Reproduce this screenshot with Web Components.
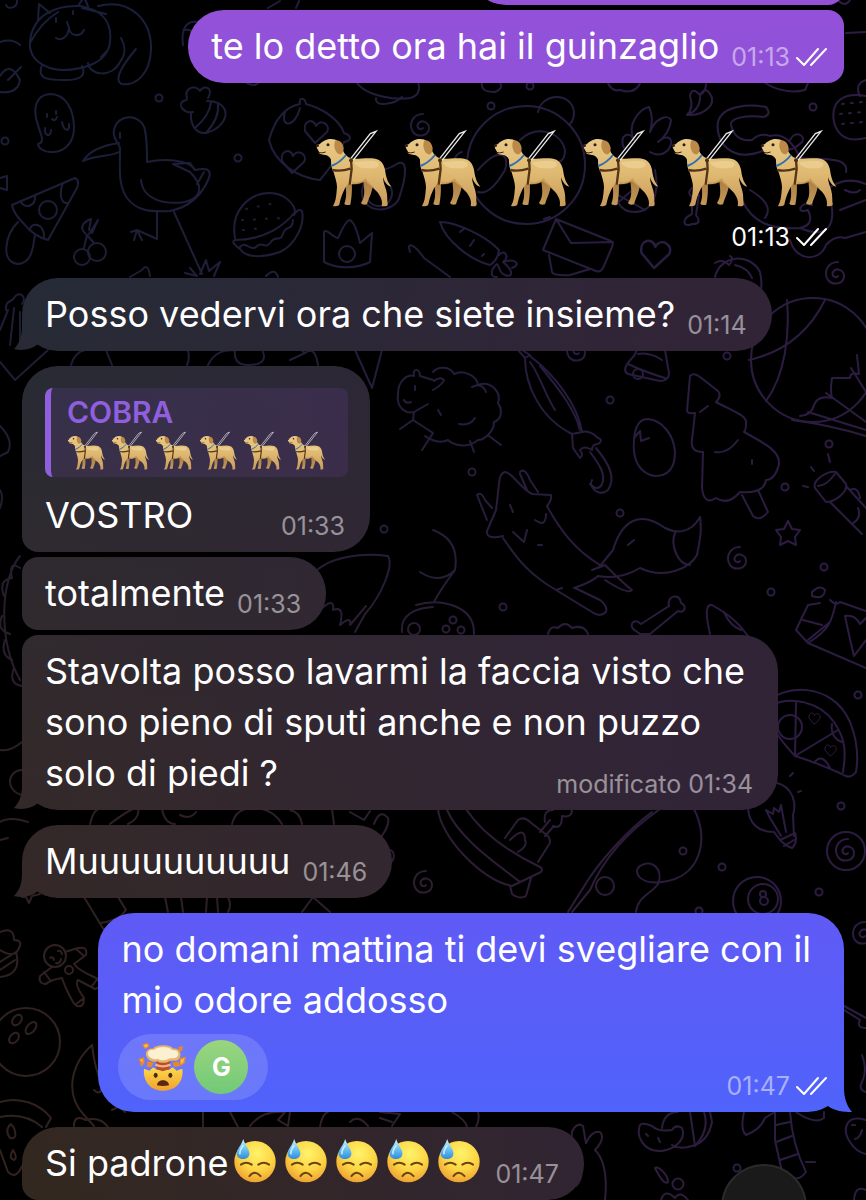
<!DOCTYPE html>
<html lang="it">
<head>
<meta charset="utf-8">
<meta name="viewport" content="width=device-width, initial-scale=1">
<title>Chat</title>
<style>
    body{
        margin: 0;
        background: #000;
        color: #fff;
        font-family: Inter, "Liberation Sans", sans-serif;
        height: 100vh;
        overflow: hidden;
    }
</style>
</head>
<body>
<chat-screen>
    <chat-bubble out empty></chat-bubble>
    <chat-bubble out joined time="01:13">te lo detto ora hai il guinzaglio</chat-bubble>
    <chat-stickers time="01:13">
        <chat-emoji name="dog"></chat-emoji><chat-emoji name="dog"></chat-emoji><chat-emoji name="dog"></chat-emoji><chat-emoji name="dog"></chat-emoji><chat-emoji name="dog"></chat-emoji><chat-emoji name="dog"></chat-emoji>
    </chat-stickers>
    <chat-bubble tail time="01:14">Posso vedervi ora che siete insieme?</chat-bubble>
    <chat-bubble first time="01:33">
        <chat-quote slot="quote" name="COBRA">
            <chat-emoji small name="dog"></chat-emoji><chat-emoji small name="dog"></chat-emoji><chat-emoji small name="dog"></chat-emoji><chat-emoji small name="dog"></chat-emoji><chat-emoji small name="dog"></chat-emoji><chat-emoji small name="dog"></chat-emoji>
        </chat-quote>VOSTRO</chat-bubble>
    <chat-bubble joined time="01:33">totalmente</chat-bubble>
    <chat-bubble joined tail multiline time="01:34" note="modificato">Stavolta posso lavarmi la faccia visto che<br>sono pieno di sputi anche e non puzzo<br>solo di piedi ?</chat-bubble>
    <chat-bubble tail time="01:46">Muuuuuuuuuu</chat-bubble>
    <chat-bubble out tail multiline time="01:47">no domani mattina ti devi svegliare con il<br>mio odore addosso<chat-reaction slot="reaction" initial="G"></chat-reaction></chat-bubble>
    <chat-bubble first time="01:47">Si padrone<chat-emoji name="sweat"></chat-emoji><chat-emoji name="sweat"></chat-emoji><chat-emoji name="sweat"></chat-emoji><chat-emoji name="sweat"></chat-emoji><chat-emoji name="sweat"></chat-emoji></chat-bubble>
</chat-screen>

<script>
// hand drawn wallpaper, coloured through a mask
class ChatWallpaper extends HTMLElement {
    constructor() {
        super();
    }
    connectedCallback() {
        let root = this.attachShadow({ mode: 'open' });
        root.innerHTML = `
    <style>
    :host{
        display: block;
        overflow: hidden;
    }
    svg{
        display: block;
        width: 100%;
        height: 100%;
    }
    </style>
    <svg viewBox="0 0 866 1200" preserveAspectRatio="xMinYMin slice" aria-hidden="true">
        <defs>
            <linearGradient id="down" x2="0" y2="1">
                <stop offset="0" stop-color="#191f3a"/>
                <stop offset=".35" stop-color="#201d34"/>
                <stop offset=".65" stop-color="#2d1f25"/>
                <stop offset="1" stop-color="#33221d"/>
            </linearGradient>
            <linearGradient id="side">
                <stop offset=".15" stop-color="#2c1c42" stop-opacity="0"/>
                <stop offset=".9" stop-color="#2c1c42"/>
            </linearGradient>
            <g id="spiral"><path d="M2 1 C0 4 -5 1 -3 -3 C0 -8 8 -5 8 1 C8 9 -3 11 -8 5 C-13 -3 -8 -13 2 -13"/></g>
            <g id="dot"><circle r="3.5"/></g>
            <g id="heart"><path d="M0 12 L-10 0 C-12 -11 -1 -13 1 -5 C6 -13 16 -6 12 1 Z"/></g>
            <g id="star"><path d="M0 -12 L4 -4 L12 -3 L7 4 L8 12 L0 8 L-8 12 L-7 4 L-12 -3 L-4 -4 Z"/></g>
            <mask id="lines" maskUnits="userSpaceOnUse" x="0" y="0" width="866" height="1200">
                <g fill="none" stroke="#fff" stroke-width="2" stroke-linecap="round" stroke-linejoin="round">
                    <!-- cat -->
                    <path d="M30 41 C33 15 55 5 80 6 C105 10 112 25 110 42 C108 62 85 70 62 70 C45 69 28 60 30 41Z M38 20 L39 4 L50 13 M78 6 L84 -3 L88 6 M30 43 C38 28 48 18 58 12 M82 8 L106 14 M98 6 C130 -2 152 20 151 50 C150 75 135 86 122 84 C112 80 125 62 136 49 M88 63 C90 76 112 78 120 62 C126 54 126 47 121 38 M42 65 C36 80 50 80 65 80 C82 80 86 75 82 66 M56 38 C60 41 68 38 69 28 L67 22 M69 28 C70 36 80 38 84 30 M56 18 V22 M73 11 V14 M101 57 L108 50"/>
                    <path d="M0 42 Q12 38 20 45 M0 76 Q10 60 20 80 Q18 94 0 92 M8 80 L21 67 M6 5 C8 10 18 8 17 0"/>
                    <!-- ghost -->
                    <path d="M38 144 C46 142 40 134 38 125 C32 108 36 95 50 94 C66 94 74 110 74 128 C74 145 62 153 50 152 C44 152 38 148 38 144Z M45 128 C44 136 51 138 51 130 M62 122 C64 132 70 132 69 124 M52 119 Q55 122 57 117 M47 114 V117 M56 111 V114"/>
                    <!-- bee -->
                    <path d="M193 112 C185 114 178 106 182 102 C184 99 187 102 187 98 C184 88 195 84 200 91 C204 84 214 88 208 98 M191 113 C190 125 196 134 206 133 C218 130 228 120 225 110 C222 103 214 101 207 101 M195 128 C202 122 210 112 211 102 M206 133 C214 124 219 114 218 105"/>
                    <!-- bird -->
                    <path d="M147 162 C147 150 146 135 145 130 C142 114 118 112 114 130 C112 140 119 142 120 148 C120 170 118 185 127 198 C137 211 150 212 170 211 C190 207 202 195 209 178 C212 168 205 168 195 170 C190 160 165 158 147 162 M119 143 C105 145 90 150 83 161 C95 155 110 157 119 152 M141 180 C143 200 165 205 185 202 C203 197 203 185 190 172 L173 164 L190 163 L195 170 M197 184 L204 172 M120 133 V138 M157 212 V239 L137 230 M137 230 L131 232 M137 230 L134 240 M137 230 L142 240 M174 212 L202 274 M185 273 L197 276 L190 268 M200 274 L206 260 L209 271 L220 262 L214 276"/>
                    <!-- pizza slice -->
                    <path d="M12 205 L75 178 C80 180 78 185 77 188 L48 240 C40 238 30 232 25 225 C18 218 13 212 12 205Z M20 201 C26 210 36 206 35 195 M63 183 C58 196 62 204 68 203 M30 230 C30 222 45 222 44 238 M18 222 C5 235 0 262 18 264 C33 263 33 245 35 235"/>
                    <circle cx="48" cy="210" r="9"/>
                    <!-- cherries -->
                    <circle cx="82" cy="257" r="8"/><circle cx="97" cy="252" r="9"/>
                    <path d="M84 248 L87 235 L94 243 M87 235 C78 228 83 222 91 219 L89 230 M89 234 L98 220 L92 233"/>
                    <!-- burger -->
                    <path d="M235 238 C230 210 250 193 270 193 C285 193 295 205 295 212 C285 225 265 240 235 240Q230 242 240 249 C246 258 262 258 280 252 C295 245 305 225 302 211 Q298 208 294 215 M240 247 C246 240 250 252 256 247 C262 240 265 250 270 243 C276 234 280 243 283 234 C286 224 292 232 293 220"/>
                    <path stroke-dasharray="1 11" d="M246 209 L280 202 M242 220 L284 218 M243 230 L262 228"/>
                    <!-- crown -->
                    <path d="M324 262 V232 C326 228 334 238 338 238 Q346 220 350 220 Q356 224 360 243 L372 233 L370 262 C355 270 335 268 324 262Z"/>
                    <circle cx="347" cy="254" r="8"/>
                    <!-- pillow -->
                    <path d="M269 140 C275 118 285 107 300 104 C298 97 305 97 306 104 C322 108 340 120 344 133 C352 136 352 140 344 142 C340 155 330 168 320 180 C300 178 275 165 269 140Z M285 112 C280 128 295 128 300 108"/>
                    <use href="#heart" x="315" y="131"/><use href="#heart" x="292" y="161"/>
                    <path d="M355 80 C365 98 400 100 410 98 Q422 95 418 82 M376 98 C374 108 395 104 402 97 M245 82 Q255 88 259 82 M395 165 C410 155 405 180 400 195 C396 215 360 215 362 190 C366 170 385 172 395 165"/>
                    <circle cx="379" cy="193" r="13"/>
                    <use href="#spiral" x="421" y="127"/>
                    <path d="M183 45 Q180 20 198 22 M184 30 Q195 28 196 40 M268 8 L280 1 M296 8 L299 1"/>
                    <path d="M130 277 L142 270 Q148 262 150 276 M266 276 Q275 267 278 277 M410 252 C406 240 415 245 424 258 L450 277"/>
                    <!-- panda -->
                    <circle cx="526" cy="165" r="59"/>
                    <path d="M538 112 C542 92 572 92 574 112 Q574 120 570 124 M462 152 Q450 155 455 180 M478 170 C500 145 510 155 505 170 Q490 196 478 192 M520 140 C535 125 560 130 565 150 Q565 168 545 160"/>
                    <!-- pineapple -->
                    <path d="M624 148 C618 135 630 130 634 140 C626 125 640 108 649 107 C653 115 652 125 650 132 C655 118 668 114 671 120 C670 130 664 138 658 142 C668 132 676 140 668 150 Q660 158 650 152 M620 180 C612 200 620 212 635 212 C652 212 660 195 655 170 M618 195 L645 210 M650 175 L615 205"/>
                    <!-- carrot -->
                    <path d="M440 222 C455 222 485 235 499 250 C498 258 495 262 490 265 C470 260 445 240 440 222Z M460 232 L465 228 M470 246 L474 240 M482 256 L484 254 M499 255 C505 248 510 258 503 262 C515 258 522 264 512 268 M503 262 C515 272 512 278 505 275 C498 272 500 266 497 264 C490 270 490 278 497 277 M544 219 L550 217"/>
                    <!-- envelope -->
                    <path d="M556 219 L611 241 Q614 243 612 247 L603 268 Q600 273 596 271 L543 250Z M556 219 L571 243 L613 242 M549 255 L552 272 Q554 276 570 275 L590 269"/>
                    <g transform="translate(654 253) scale(1.25)"><use href="#heart"/></g>
                    <!-- leaf, octopus, strawberry -->
                    <path d="M706 84 Q706 92 700 95 M687 115 C700 116 714 108 712 98 Q706 84 700 95 Q692 86 690 96 Q694 108 687 115 Q700 110 700 97"/>
                    <path d="M790 140 C795 130 806 135 802 142 Q790 155 765 150 C730 165 715 140 718 122 C722 105 750 104 766 107 Q772 114 764 117 C745 115 730 118 731 125 Q735 142 752 140 Q760 132 770 136 C785 132 795 146 800 158 C815 160 850 155 846 172 M742 200 C752 222 770 230 800 228 Q815 225 808 210 C795 215 800 200 812 205 M750 190 Q775 205 765 218 M790 240 C796 262 820 262 826 245 Q835 235 845 238 L866 232 M800 228 C840 245 835 205 826 190 Q845 175 866 184 M845 190 Q855 195 860 190 M840 210 L866 200 M695 186 C688 190 688 194 692 197 V214 C680 220 684 228 692 224 Q703 224 696 215 L699 195"/>
                    <path d="M834 122 C830 100 845 92 866 96 M834 122 C838 138 850 142 866 138 M860 96 Q854 84 866 80"/>
                    <path stroke-dasharray="2 7" d="M842 104 L862 102 M840 114 L864 112 M842 124 L862 122"/>
                    <use href="#spiral" x="836" y="275"/>
                    <path d="M715 277 C720 255 750 252 760 272 Q764 290 757 297 M735 265 Q748 268 752 278 M715 263 Q722 258 729 265 Q735 258 730 256 M846 33 L866 32 M838 0 Q845 8 850 0 M482 83 Q480 92 495 92 Q504 88 500 83 M608 83 Q612 92 620 90 Q635 95 640 83 M765 83 Q785 95 805 90 L808 83"/>
                    <!-- popcorn and left edge -->
                    <path d="M6 310 C5 300 12 302 14 298 C18 290 28 296 22 304 M8 310 L0 330 M14 308 L10 345 M20 312 L20 345 M0 362 L15 380 L48 350 M71 365 Q75 352 85 350 M106 350 L112 365 M188 350 Q190 360 187 365 M208 365 C215 350 228 350 235 350 Q233 365 248 365 Q268 365 263 352 M290 360 L305 353 L301 350 M305 353 Q315 345 318 365 M355 350 L372 388 L382 350 M0 426 Q14 440 8 452 L0 456 M0 490 Q4 496 0 508"/>
                    <!-- tiger -->
                    <path d="M398 394 C398 380 408 374 414 376 C412 368 420 368 420 376 L433 380 M398 394 C396 408 406 414 414 412 L428 404 M414 412 L413 420 L400 429 M413 420 L433 433 L422 450 M404 400 Q406 404 411 402 M415 386 V390"/>
                    <!-- sheep -->
                    <path d="M433 372 C438 366 450 366 454 374 C462 370 476 374 478 385 C490 380 502 392 498 403 C504 412 500 420 494 422 C494 432 484 440 478 440 C466 450 452 444 448 440 C440 444 430 440 425 436 M433 390 Q442 385 444 380 Q440 376 434 381 M470 441 L474 452 M489 436 L501 445 M438 410 L441 415 M459 424 Q470 426 475 418 M472 387 Q482 382 486 392"/>
                    <!-- umbrella -->
                    <path d="M518 350 L525 358 L530 355 L522 350 M525 358 C525 385 540 418 572 434 L582 432 C578 405 555 375 530 356 M530 362 C540 375 545 395 555 410 M540 366 C560 390 575 410 580 430 M572 434 L573 448 L580 458 Q584 455 580 450 Q584 445 592 450 Q592 444 598 444 Q604 440 598 438 Q590 430 582 432 M590 452 C600 465 606 475 602 484 Q598 492 590 484 M596 448 C610 465 616 478 608 490 C598 498 588 486 592 480"/>
                    <use href="#spiral" x="577" y="352"/>
                    <!-- bell -->
                    <path d="M637 350 L634 356 Q620 370 628 374 L660 381 Q672 380 668 368 L665 350 M628 364 Q645 372 665 378 M638 354 Q650 352 662 360"/>
                    <circle cx="638" cy="374" r="5"/>
                    <!-- cracked egg -->
                    <path d="M634 440 C635 425 640 419 648 419 C662 420 674 435 675 452 C675 468 668 476 655 476 C640 474 632 460 634 440Z M634 438 L640 431 L641 441 L649 438"/>
                    <!-- tree -->
                    <path d="M687 411 L690 376 Q694 372 700 377 L718 391 Q722 396 716 402 C735 412 748 416 746 424 Q746 430 744 432 C768 445 780 452 779 464 Q775 480 766 480 Q764 494 740 492 Q728 506 716 498 Q704 506 702 488 L703 452 Q690 452 692 440 L695 413 Q688 414 687 411Z M700 412 L708 406 M715 452 Q728 454 738 440 M742 495 L753 516 Q760 522 768 512 L758 490 M752 460 V464"/>
                    <use href="#star" x="788" y="533"/>
                    <!-- ball -->
                    <circle cx="813" cy="360" r="62"/>
                    <path d="M787 300 C790 335 785 375 766 401 M749 360 C785 352 810 330 825 300 M857 355 L859 374 Q850 372 850 378 L832 378 Q830 390 832 398 Q818 395 814 405 Q812 415 800 416 M792 420 Q830 425 866 436 M808 412 L866 430 M826 393 L866 422 M851 368 L866 392"/>
                    <!-- torch -->
                    <path d="M815 488 C812 480 828 470 836 472 L846 484 C848 492 835 502 826 502 Z M818 486 Q826 486 835 474 M830 502 L862 534 M846 486 L866 508 M850 490 Q858 486 860 498 M852 524 Q862 518 858 508 M803 486 L808 487 M811 467 L814 471 M828 454 L830 462"/>
                    <!-- fox -->
                    <path d="M503 536 Q486 540 487 531 L496 510 C500 480 498 474 505 472 C512 472 520 488 532 494 L551 495 Q552 500 547 506 C560 530 575 550 600 565 M503 538 C518 560 530 575 556 590 L592 612 Q600 618 606 612 Q608 606 600 600 L575 588 M556 590 L562 588 M574 588 Q592 582 598 576 Q620 580 640 568 C665 580 690 568 697 555 C700 540 702 530 700 517 C690 535 675 533 665 528 C640 510 622 520 613 550 L600 566 M592 570 L605 565 Q625 585 632 590 Q628 595 605 580 M675 533 C670 545 678 565 690 565 M477 495 C480 492 483 495 485 500 L492 508 M477 495 L487 520 M520 472 C524 468 528 474 530 480 L538 492 M520 474 L527 490 M510 505 L513 512 M535 520 Q546 528 546 514 M513 532 L524 542 L527 530 M538 545 H542 M628 545 L634 540"/>
                    <path d="M433 530 Q460 540 455 570 Q440 585 420 572 M455 570 Q440 590 434 602 M416 605 C440 598 475 605 474 634 M548 634 Q550 625 558 628 Q565 620 572 628 Q584 624 588 634 M710 634 C705 612 706 604 712 605 Q730 615 740 626 L748 636 M724 612 Q730 626 741 630"/>
                    <circle cx="453" cy="620" r="3.500"/><circle cx="446" cy="629" r="3.500"/><circle cx="461" cy="630" r="3.500"/>
                    <use href="#spiral" x="738" y="560"/>
                    <!-- bone -->
                    <path d="M650 634 L678 611 C684 614 688 606 681 603 C680 592 666 596 669 606 L641 624 C632 616 628 628 636 631 L640 634 Z"/>
                    <!-- crisps -->
                    <path d="M830 600 Q836 606 840 602 L866 611 M820 603 L808 605 L796 630 L808 643 L866 668 M808 643 C830 630 832 620 836 602 M808 640 L830 622 M803 620 L822 625 M845 616 Q850 640 854 656 L866 640 M845 616 Q855 614 860 624 L866 618 M812 592 Q820 584 825 590 Q824 600 812 596Z"/>
                    <!-- big leaf, saw edge -->
                    <path d="M313 574 C330 555 365 553 388 556 C394 565 382 595 365 614 L355 632 M318 612 Q335 595 333 610 Q345 605 340 625 Q352 615 350 625 L366 606 M402 632 C400 615 415 608 433 607 M20 556 C0 580 -2 640 20 680 M20 568 Q8 560 12 578 Q-2 580 4 596 M2 616 Q-4 630 10 634 M5 640 Q0 655 12 660 M14 668 Q8 684 22 686 M0 750 Q10 752 22 742 M22 770 C8 770 4 790 22 795 M0 822 Q10 816 28 822 M0 840 L8 838"/>
                    <circle cx="414" cy="629" r="6"/>
                    <!-- strip between bubbles -->
                    <path d="M90 824 Q94 808 100 809 M110 824 Q135 805 138 809 Q140 818 128 824 M162 809 Q165 824 175 824 M180 815 Q190 820 196 812 M232 824 Q235 812 245 809 M262 809 Q275 812 282 824 M290 810 Q300 812 302 824 M332 809 L334 824 M350 812 L364 820 L370 811 M374 824 Q380 808 388 818 Q390 826 380 838 M387 850 C396 848 396 862 388 864"/>
                    <use href="#spiral" x="424" y="884"/>
                    <!-- boat -->
                    <path d="M438 809 C440 835 480 880 512 886 L541 872 Q544 868 538 866 C505 850 480 830 466 809 M447 810 C460 840 500 866 520 882 M510 886 L512 894 Q520 900 526 896 L531 878 M505 838 L518 820 Q524 816 530 822 L548 836 Q552 842 548 846 L538 862 M510 840 Q525 825 525 840 Q528 846 518 852 M540 832 L550 820 M545 836 L554 826 M545 822 Q543 810 553 810 M553 826 Q562 830 562 816 M562 816 Q572 818 572 810"/>
                    <!-- fishing rod -->
                    <path d="M660 809 C630 830 605 855 590 890 L572 912 M652 812 C625 832 600 862 588 880 L568 912 M694 809 C710 840 700 878 662 882 C640 885 632 872 640 866 C652 858 664 870 658 884 C650 895 638 896 636 912"/>
                    <circle cx="605" cy="886" r="9"/>
                    <!-- half pizza -->
                    <path d="M766 704 C780 685 832 680 850 722 C858 742 858 760 856 772 Q850 780 842 774 Q815 762 795 756 C780 740 770 725 766 712 M770 706 C790 695 820 702 834 722 C846 740 846 752 843 772 M795 756 L796 703 M795 756 L838 730 M814 763 Q822 752 830 768 M832 724 Q830 738 842 742"/>
                    <circle cx="790" cy="727" r="12"/>
                    <g transform="translate(814 718) scale(.5)"><use href="#heart"/></g><g transform="translate(830 750) scale(.5)"><use href="#heart"/></g>
                    <!-- bulb -->
                    <path d="M748 806 C748 825 760 832 774 832 L780 840 M762 783 C790 778 798 800 793 815 L794 836 M780 840 L795 833 Q798 842 792 848 Q786 846 780 840Z M784 846 L794 840 M770 818 L766 810 L773 814 L774 808 L779 812 L781 805 L786 832 M770 818 L781 836 M774 764 L775 769 M790 776 L793 773 M798 792 L801 791"/>
                    <use href="#spiral" x="846" y="852"/><circle cx="846" cy="851" r="19"/>
                    <!-- eight ball -->
                    <circle cx="757" cy="901" r="24"/><circle cx="763" cy="899" r="15"/><circle cx="763" cy="894" r="3"/><circle cx="764" cy="901" r="4"/>
                    <!-- bottom left: muffin, biscuit man, bowling ball, moon, melon -->
                    <path d="M0 932 Q14 926 14 940 Q24 940 18 950 Q14 958 0 950 M0 962 L16 952 Q22 975 0 977 M0 970 L15 960 M22 897 L26 897 L29 903 L32 896 L40 894 M84 897 L107 935 M118 897 L126 910 M100 923 Q120 920 125 911 M165 897 L168 912 M181 897 L183 912 M207 897 L206 912 M217 897 L218 912 M228 897 Q232 905 228 912 M302 912 L313 897 L330 912"/>
                    <circle cx="55" cy="956" r="11"/>
                    <path d="M65 952 L78 948 Q88 946 86 955 L74 964 Q78 970 96 978 Q104 986 95 989 L78 980 Q74 984 84 998 Q84 1008 77 1006 Q74 1006 65 986 L62 978 Q50 980 46 984 Q38 984 40 976 L52 967 M44 972 L50 980 M76 949 L84 956 M92 986 L98 978 M76 1004 L84 998 M50 958 Q53 956 54 960 M58 951 Q61 950 62 954 M56 963 Q60 964 61 959"/>
                    <circle cx="69" cy="970" r="4"/>
                    <circle cx="26" cy="1042" r="34"/><ellipse cx="17" cy="1020" rx="4" ry="6" transform="rotate(40 17 1020)"/><ellipse cx="31" cy="1028" rx="4" ry="7" transform="rotate(40 31 1028)"/><ellipse cx="14" cy="1038" rx="4" ry="6" transform="rotate(40 14 1038)"/>
                    <path d="M92 1045 C70 1065 65 1095 84 1115 L94 1126 M92 1045 C96 1080 105 1095 125 1112 M94 1090 Q100 1096 102 1088 M112 1110 L120 1106 M74 1126 Q74 1114 86 1120 Q100 1116 108 1127 M0 1102 C20 1096 40 1104 51 1118 L46 1127 M0 1117 Q25 1112 42 1127 M11 1124 Q4 1130 10 1138 Q18 1140 14 1128Z M0 1150 L8 1172 Q16 1180 22 1166 M13 1150 Q8 1158 14 1160 Q18 1158 13 1150"/>
                    <path d="M203 1112 V1127 M230 1112 L238 1127 M250 1126 Q262 1110 285 1112 L278 1120 L288 1126 L290 1112 M320 1127 Q322 1114 328 1112 M350 1122 Q358 1114 368 1126 M380 1112 L400 1114 L392 1126 M380 1118 L392 1122 M452 1112 Q466 1120 467 1127 M478 1112 Q480 1120 476 1127"/>
                    <!-- rabbit, mushrooms, palm -->
                    <path d="M572 1140 C570 1128 578 1122 583 1126 L586 1143 Q592 1130 600 1132 Q606 1138 595 1150 C605 1160 607 1180 605 1200 M578 1160 Q586 1176 576 1186 M640 1125 C636 1135 642 1152 662 1151 C678 1148 686 1138 682 1128 Q676 1124 672 1130 Q658 1132 652 1126 Q642 1122 640 1125Z M672 1145 Q680 1150 692 1146 Q708 1142 712 1122 L710 1112 M662 1128 Q664 1112 678 1112 M690 1112 L695 1146 M704 1112 Q710 1130 695 1146 M646 1134 L648 1136 M658 1138 L660 1142 M744 1112 Q740 1130 746 1135 Q760 1130 765 1118 L775 1112 M775 1112 L775 1140 L782 1172 M790 1112 C792 1140 800 1160 806 1172 Q800 1180 794 1178 M776 1125 L790 1122 M776 1142 L792 1136 M780 1160 L798 1154 M806 1162 L815 1162 M796 1112 Q815 1125 824 1118 V1112 M866 1120 C845 1114 842 1130 850 1142 Q856 1152 866 1154 M852 1125 H855 M855 1139 Q860 1138 862 1130 M854 1200 Q855 1185 866 1190 M655 1168 C658 1166 668 1174 668 1182 Q664 1186 655 1168Z M661 1200 Q665 1188 675 1198 Q680 1190 688 1200"/>
                    <circle cx="678" cy="1184" r="5.500"/>
                    <use href="#spiral" x="863" y="935"/>
                    <path d="M844 1006 L866 1018 M844 1010 L860 1020 Q856 1028 866 1028 M862 1055 Q868 1070 862 1082 Q858 1090 866 1092"/>
                    <!-- loose bubbles -->
                    <use href="#dot" x="159" y="98"/><use href="#dot" x="238" y="158"/><use href="#dot" x="5" y="141"/><use href="#dot" x="491" y="106"/><use href="#dot" x="530" y="86"/><use href="#dot" x="813" y="107"/><use href="#dot" x="727" y="356"/><use href="#dot" x="610" y="400"/><use href="#dot" x="472" y="472"/><use href="#dot" x="620" y="513"/><use href="#dot" x="829" y="444"/><use href="#dot" x="785" y="487"/><use href="#dot" x="384" y="529"/><use href="#dot" x="503" y="607"/><use href="#dot" x="771" y="592"/><use href="#dot" x="824" y="567"/><use href="#dot" x="858" y="695"/><use href="#dot" x="841" y="806"/><use href="#dot" x="683" y="851"/><use href="#dot" x="722" y="867"/><use href="#dot" x="819" y="892"/><use href="#dot" x="699" y="911"/><use href="#dot" x="737" y="1168"/>
                    <path d="M0 178 L7 176 L7 190 L0 188"/>
                </g>
            </mask>
        </defs>
        <g mask="url(#lines)">
            <rect width="866" height="1200" fill="url(#down)"/>
            <rect width="866" height="1200" fill="url(#side)"/>
        </g>
    </svg>
      `;
    }
}

class ChatScreen extends HTMLElement {
    constructor() {
        super();
    }
    connectedCallback() {
        let root = this.attachShadow({ mode: 'open' });
        root.innerHTML = `
    <style>
    :host{
        display: block;
        position: relative;
        height: 100%;
        overflow: hidden;
    }
    chat-wallpaper{
        position: absolute;
        inset: 0;
    }
    main{
        position: relative;
        box-sizing: border-box;
        height: 100%;
        padding: 0 22px;
        display: flex;
        flex-direction: column;
        justify-content: flex-end;
    }
    .down{
        position: absolute;
        right: 59px;
        bottom: -50px;
        width: 86px;
        height: 86px;
        border-radius: 50%;
        border: 2px solid #2b2b2b;
        background: #1a1a1a;
    }
    </style>
    <chat-wallpaper></chat-wallpaper>
    <main><slot></slot></main>
    <button class="down" type="button" aria-label="Vai in fondo"></button>
      `;
    }
}

// time, optional note and the double tick of sent messages
class ChatMeta extends HTMLElement {
    constructor() {
        super();
    }
    connectedCallback() {
        let root = this.attachShadow({ mode: 'open' });
        let note = this.getAttribute('note');
        let tick = this.hasAttribute('read') ? `
        <svg width="31" height="20" viewBox="0 0 31 20" role="img" aria-label="Letto">
            <path d="M1 11 L8 18 L22 2 M15 18 L30 2" fill="none" stroke="#fff" stroke-width="2" stroke-linecap="round" stroke-linejoin="round"/>
        </svg>` : '';
        root.innerHTML = `
    <style>
    :host{
        display: flex;
        flex: none;
        align-items: center;
        gap: 6px;
        font-size: 25px;
        line-height: 30px;
        white-space: nowrap;
        color: var(--meta, rgba(255, 255, 255, .5));
    }
    svg{
        flex: none;
    }
    </style>
    <span>${note ? note + ' ' : ''}${this.getAttribute('time')}</span>${tick}
      `;
    }
}

class ChatBubble extends HTMLElement {
    constructor() {
        super();
    }
    connectedCallback() {
        let root = this.attachShadow({ mode: 'open' });
        let out = this.hasAttribute('out');
        let note = this.getAttribute('note') || '';
        root.innerHTML = `
    <style>
    :host{
        --fill: linear-gradient(90deg, rgba(49, 36, 55, 0) 5%, #312437 80%) fixed,
                linear-gradient(#242b38 20%, #2e2a30 45%, #34292a 66%, #33281f 100%) fixed;
        display: flex;
        flex: none;
        margin-top: 15px;
    }
    :host([out]){
        --fill: linear-gradient(#9351d8, #8855da 20%, #605af5 76%, #4f63fb 93%) fixed;
        --meta: rgba(255, 255, 255, .5);
        justify-content: flex-end;
    }
    :host([joined]){
        margin-top: 5px;
    }
    .bubble{
        position: relative;
        padding: 11px 17px;
        border-radius: 36px;
        background: var(--fill);
    }
    :host([first]) .bubble{
        border-bottom-left-radius: 16px;
    }
    :host([joined]) .bubble{
        border-top-left-radius: 16px;
        border-bottom-left-radius: 16px;
    }
    :host([joined][tail]) .bubble{
        border-bottom-left-radius: 36px;
    }
    :host([out][joined]) .bubble, :host([empty]) .bubble{
        border-radius: 36px 16px 16px 36px;
    }
    :host([empty]) .bubble{
        width: 340px;
        height: 51px;
    }
    .tail{
        position: absolute;
        left: -8px;
        bottom: 0;
        width: 36px;
        height: 36px;
        background: var(--fill);
        clip-path: path("M8 0 V12 C8 22 5 29 0 34 C8 36 17 35 24 29 L24 0 Z");
    }
    :host([out]) .tail{
        left: auto;
        right: -8px;
        clip-path: path("M28 0 V12 C28 22 31 30 36 36 C28 36 18 35 12 30 L12 0 Z");
    }
    .body{
        position: relative;
    }
    .row{
        display: flex;
        justify-content: space-between;
        align-items: flex-end;
        gap: 12px;
        padding: 0 8px 0 6px;
    }
    :host([out]) .row{
        padding-right: 0;
    }
    .text{
        font-size: 36px;
        line-height: 51px;
        white-space: nowrap;
    }
    :host([multiline]) .body{
        display: grid;
        padding: 0 8px 0 6px;
    }
    :host([multiline][out]) .body{
        padding-right: 0;
    }
    :host([multiline]) .row{
        display: contents;
    }
    :host([multiline]) .text{
        grid-area: 1 / 1;
        padding-right: 8px;
    }
    :host([out][multiline]) .text{
        padding-right: 16px;
    }
    :host([multiline]) chat-meta{
        grid-area: 1 / 1;
        align-self: end;
        justify-self: end;
    }
    :host([multiline][out]) chat-meta{
        grid-area: 2 / 1;
    }
    ::slotted(chat-quote){
        margin: 11px 5px 13px 6px;
    }
    ::slotted(chat-reaction){
        grid-area: 2 / 1;
        justify-self: start;
        margin: 8px 0 1px -3px;
    }
    ::slotted(chat-emoji[name="sweat"]){
        vertical-align: -8px;
        margin: 0 2px 0 5px;
    }
    </style>
    <div class="bubble">
        ${this.hasAttribute('tail') ? '<div class="tail"></div>' : ''}
        ${this.hasAttribute('empty') ? '' : `
        <slot name="quote"></slot>
        <div class="body">
            <div class="row">
                <div class="text"><slot></slot></div>
                <chat-meta time="${this.getAttribute('time')}" note="${note}" ${out ? 'read' : ''}></chat-meta>
            </div>
            <slot name="reaction"></slot>
        </div>`}
    </div>
      `;
    }
}

// message made only of big emoji, no bubble behind it
class ChatStickers extends HTMLElement {
    constructor() {
        super();
    }
    connectedCallback() {
        let root = this.attachShadow({ mode: 'open' });
        root.innerHTML = `
    <style>
    :host{
        --meta: #fff;
        display: flex;
        flex: none;
        flex-direction: column;
        align-items: flex-end;
        gap: 13px;
        margin-top: 15px;
        padding: 31px 6px 11px;
    }
    .list{
        display: flex;
        gap: 11px;
    }
    chat-meta{
        margin-right: 11px;
    }
    </style>
    <div class="list"><slot></slot></div>
    <chat-meta time="${this.getAttribute('time')}" read></chat-meta>
      `;
    }
}

class ChatQuote extends HTMLElement {
    constructor() {
        super();
    }
    connectedCallback() {
        let root = this.attachShadow({ mode: 'open' });
        root.innerHTML = `
    <style>
    :host{
        display: block;
        padding: 5px 22px 6px 16px;
        border-left: 6px solid #8f5fdd;
        border-radius: 8px;
        background: rgba(143, 95, 221, .13);
    }
    b{
        display: block;
        font-size: 30px;
        font-weight: 600;
        line-height: 38px;
        color: #8f5fdd;
    }
    .list{
        display: flex;
        gap: 5px;
    }
    </style>
    <b>${this.getAttribute('name')}</b>
    <div class="list"><slot></slot></div>
      `;
    }
}

class ChatReaction extends HTMLElement {
    constructor() {
        super();
    }
    connectedCallback() {
        let root = this.attachShadow({ mode: 'open' });
        root.innerHTML = `
    <style>
    :host{
        display: block;
    }
    button{
        display: flex;
        align-items: center;
        gap: 8px;
        height: 66px;
        padding: 0 20px;
        border: 0;
        border-radius: 33px;
        background: rgba(255, 255, 255, .15);
        font: inherit;
        color: #fff;
    }
    .avatar{
        width: 54px;
        border-radius: 50%;
        background: linear-gradient(#9ad57f, #72c977);
        font-size: 25px;
        font-weight: 700;
        line-height: 54px;
        text-align: center;
    }
    </style>
    <button type="button">
        <chat-emoji name="boom"></chat-emoji>
        <span class="avatar">${this.getAttribute('initial')}</span>
    </button>
      `;
    }
}

const EMOJI = {
    dog: {
        label: 'cane guida', width: 78, height: 80, box: '18 20 234 240',
        art: `
        <defs>
            <linearGradient id="fur" x2="0" y2="1"><stop offset="0" stop-color="#e9c987"/><stop offset=".5" stop-color="#e0ba72"/><stop offset="1" stop-color="#c99a5c"/></linearGradient>
            <linearGradient id="far" x2="0" y2="1"><stop offset="0" stop-color="#a87a3e"/><stop offset="1" stop-color="#c4995a"/></linearGradient>
        </defs>
        <path fill="url(#far)" d="M108 170 C112 205 114 225 106 244 Q108 250 124 247 C128 225 130 205 128 175Z M162 165 C164 195 172 220 156 242 Q160 249 174 246 C180 225 190 210 192 185Z"/>
        <path fill="url(#fur)" d="M22 68 L32 66 C40 58 50 50 66 50 C84 50 92 60 98 75 C104 92 112 104 128 109 C150 112 185 102 208 112 C222 119 228 135 230 155 C234 175 240 184 247 193 C236 192 226 178 222 164 C222 180 228 190 232 205 C236 220 234 235 236 244 Q238 254 218 251 C222 235 214 220 204 208 C190 195 178 185 168 177 C150 186 135 188 118 184 C108 195 98 215 92 242 Q92 254 72 251 C82 235 82 215 84 195 C84 180 78 165 74 150 C66 135 66 120 66 112 C64 105 56 98 44 97 C34 96 28 92 30 88 L24 78Z"/>
        <path fill="#f0d9a2" opacity=".55" d="M134 118 C160 120 190 112 206 120 C216 132 200 140 180 138 C160 138 140 136 134 118Z"/>
        <path fill="#b17f3c" opacity=".45" d="M130 178 C145 184 158 178 170 168 C176 180 190 190 200 200 C188 194 176 184 168 178 C152 186 140 187 130 184Z"/>
        <path fill="#bb8a48" d="M80 54 C92 53 102 62 104 78 C104 90 98 98 92 96 C82 94 78 84 76 72 Q76 58 80 54Z"/>
        <ellipse cx="25" cy="70" rx="5" ry="4" fill="#2b1c14"/><circle cx="57" cy="67" r="4.500" fill="#2b1c14"/>
        <path d="M28 90 Q38 94 50 89" fill="none" stroke="#3b2414" stroke-width="3"/>
        <path d="M67 131 Q92 122 111 98" fill="none" stroke="#2d6fb5" stroke-width="6"/>
        <path d="M70 143 Q96 148 124 139 M126 112 L128 140 L122 187" fill="none" stroke="#553516" stroke-width="7"/>
        <path d="M121 114 L184 34 L201 27 L132 114" fill="none" stroke="#e8e8e8" stroke-width="4"/>
        <circle cx="126" cy="114" r="6" fill="#4a2f14"/>`
    },
    sweat: {
        label: 'faccina abbattuta e sudata', width: 44, height: 46, box: '26 38 134 140',
        art: `
        <defs>
            <radialGradient id="skin" cx=".55" cy=".3" r=".75"><stop offset="0" stop-color="#fff36b"/><stop offset=".55" stop-color="#fcd443"/><stop offset="1" stop-color="#eb9930"/></radialGradient>
            <linearGradient id="drop" x2="0" y2="1"><stop offset="0" stop-color="#d2f2ff"/><stop offset=".5" stop-color="#6bc3f2"/><stop offset="1" stop-color="#2f8bdc"/></linearGradient>
        </defs>
        <circle cx="93" cy="110" r="63" fill="url(#skin)"/>
        <path d="M50 119 Q66 107 83 119 M103 119 Q120 107 136 119 M76 154 Q92 134 110 154" fill="none" stroke="#6d4312" stroke-width="6" stroke-linecap="round"/>
        <path d="M57 41 C62 58 76 72 76 85 C76 108 37 108 37 85 C37 72 53 58 57 41Z" fill="url(#drop)"/>
        <path d="M56 62 Q46 76 47 86" fill="none" stroke="#e8f9ff" stroke-width="5" stroke-linecap="round" opacity=".8"/>`
    },
    boom: {
        label: 'testa che esplode', width: 48, height: 50, box: '446 482 144 150',
        art: `
        <defs>
            <linearGradient id="head" x2="0" y2="1"><stop offset="0" stop-color="#fddc4b"/><stop offset="1" stop-color="#f0a02f"/></linearGradient>
        </defs>
        <path fill="#e9872a" d="M458 490 L474 484 L482 494 L468 504Z M566 498 L580 494 L580 506 L570 512Z M448 532 L464 528 L466 544 L456 556Z M572 530 L590 526 L586 546 L570 556Z M474 540 L494 544 L486 558 L472 556Z M548 544 L568 540 L570 554 L556 558Z"/>
        <path fill="#f8c03e" d="M463 492 L473 488 L476 494 L468 499Z M574 535 L585 531 L582 543 L574 549Z M452 535 L460 533 L460 544Z"/>
        <path fill="url(#head)" d="M464 562 L480 568 L492 558 L504 566 L520 556 L538 566 L550 558 L562 568 L579 562 C584 600 560 628 521 628 C484 628 460 600 464 562Z"/>
        <path fill="#b84f27" d="M500 530 H544 L540 564 L520 570 L502 564Z"/>
        <path d="M498 550 Q520 560 544 550" fill="none" stroke="#f3b08a" stroke-width="7"/>
        <path fill="#e8b36a" d="M474 530 C462 514 476 500 490 502 C500 488 545 488 552 502 C568 498 580 516 570 532 C560 544 548 534 540 540 C530 546 512 546 504 540 C492 544 482 540 474 530Z"/>
        <path fill="#fbf0d0" d="M478 524 C470 512 482 503 494 506 C504 494 540 494 548 506 C564 504 572 516 564 526 C556 534 546 528 538 532 C528 538 512 538 506 532 C494 536 484 532 478 524Z"/>
        <ellipse cx="499" cy="582" rx="6" ry="8" fill="#4d2711"/><ellipse cx="543" cy="582" rx="6" ry="8" fill="#4d2711"/>
        <path fill="#5a2710" d="M503 612 C504 592 538 592 539 612 Q521 616 503 612Z"/>`
    }
};

class ChatEmoji extends HTMLElement {
    constructor() {
        super();
    }
    connectedCallback() {
        let root = this.attachShadow({ mode: 'open' });
        let e = EMOJI[this.getAttribute('name')];
        let half = this.hasAttribute('small') ? 2 : 1;
        root.innerHTML = `
    <style>
    :host{
        display: inline-block;
        line-height: 0;
    }
    svg{
        display: block;
    }
    </style>
    <svg width="${e.width / half}" height="${e.height / half}" viewBox="${e.box}" role="img" aria-label="${e.label}">${e.art}</svg>
      `;
    }
}

window.customElements.define('chat-wallpaper', ChatWallpaper);
window.customElements.define('chat-emoji', ChatEmoji);
window.customElements.define('chat-meta', ChatMeta);
window.customElements.define('chat-quote', ChatQuote);
window.customElements.define('chat-reaction', ChatReaction);
window.customElements.define('chat-stickers', ChatStickers);
window.customElements.define('chat-bubble', ChatBubble);
window.customElements.define('chat-screen', ChatScreen);
</script>
</body>
</html>
